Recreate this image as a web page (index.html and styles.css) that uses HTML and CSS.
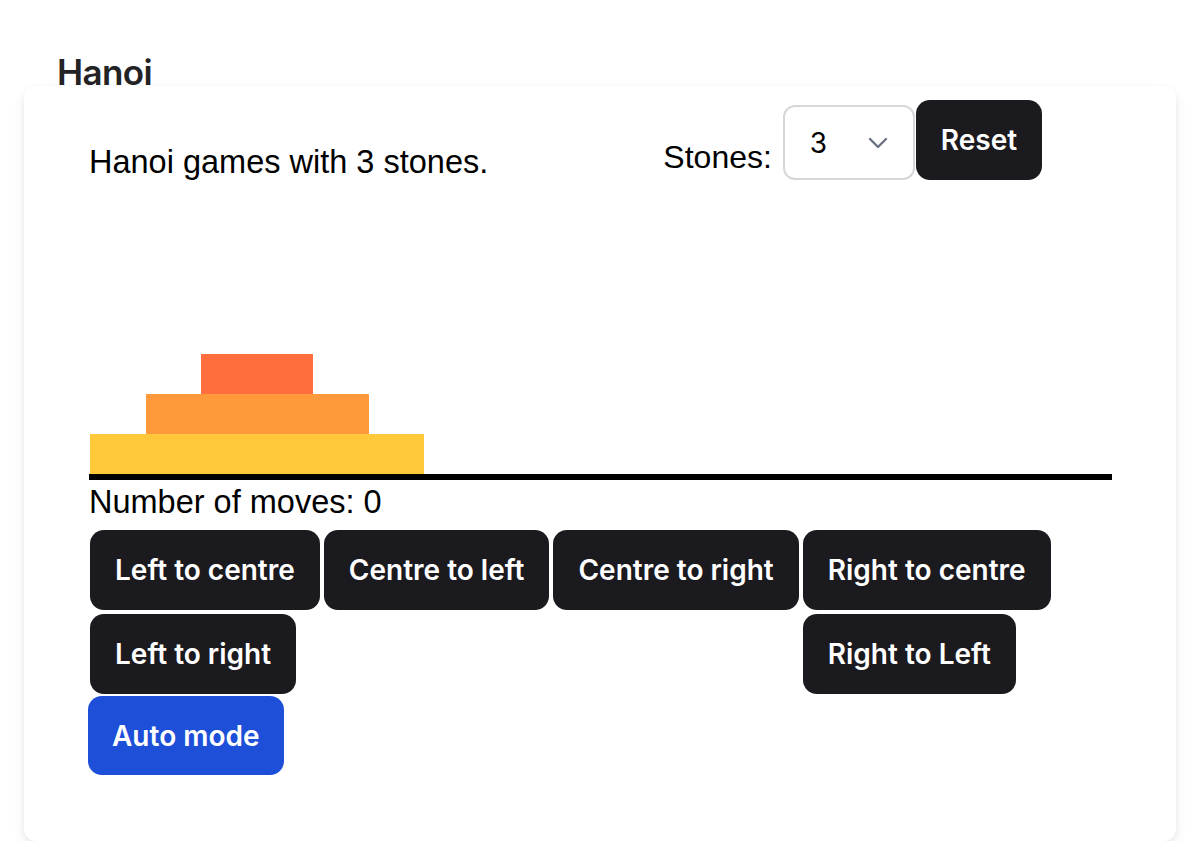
FILE: index.html
```html
<!DOCTYPE html>
<html lang="en">
<head>
<meta charset="utf-8">
<title>Hanoi</title>
<link rel="stylesheet" href="styles.css">
</head>
<body>
  <h1 class="title">Hanoi</h1>
  <main class="card">
    <header class="top">
      <p class="intro">Hanoi games with 3 stones.</p>
      <div class="controls">
        <span class="label">Stones:</span>
        <div class="select">
          <span class="select-value">3</span>
          <svg class="chevron" width="20" height="12" viewBox="0 0 20 12" aria-hidden="true">
            <path d="M2 2 L10 10 L18 2" fill="none" stroke="#6b7280" stroke-width="2.4" stroke-linecap="round" stroke-linejoin="round"/>
          </svg>
        </div>
        <button class="btn">Reset</button>
      </div>
    </header>

    <section class="board">
      <div class="peg">
        <div class="stone stone-3"></div>
        <div class="stone stone-2"></div>
        <div class="stone stone-1"></div>
      </div>
      <div class="peg"></div>
      <div class="peg"></div>
    </section>
    <div class="ground"></div>

    <p class="moves">Number of moves: 0</p>

    <div class="moves-grid">
      <button class="btn move">Left to centre</button>
      <button class="btn move">Centre to left</button>
      <button class="btn move">Centre to right</button>
      <button class="btn move">Right to centre</button>
      <button class="btn move">Left to right</button>
      <button class="btn move col4">Right to Left</button>
    </div>
    <button class="btn auto">Auto mode</button>
  </main>
</body>
</html>
```

FILE: styles.css
```css
* { box-sizing: border-box; }

html, body {
  margin: 0;
  background: #ffffff;
}

body {
  padding: 56px 20px 0 24px;
  font-family: "Liberation Sans", Arial, sans-serif;
  color: #000;
}

.title {
  margin: 0 0 -2px 33px;
  font-family: Inter, "Liberation Sans", sans-serif;
  font-weight: 600;
  font-size: 35px;
  line-height: 32px;
  letter-spacing: -0.6px;
  color: #232326;
}

.card {
  background: #fff;
  border-radius: 12px;
  box-shadow: 0 6px 14px rgba(0, 0, 0, 0.07), 0 1px 4px rgba(0, 0, 0, 0.05);
  padding: 14px 64px 66px 65px;
}

.top {
  display: grid;
  grid-template-columns: 1fr 1fr;
  align-items: end;
}

.intro {
  margin: 0 0 -6px 0;
  font-size: 32.5px;
  line-height: 48px;
}

.controls {
  justify-self: center;
  display: flex;
  align-items: flex-end;
  margin-right: 7px;
}

.label {
  font-size: 32px;
  line-height: 48px;
  margin-right: 11px;
  margin-bottom: -1px;
}

.select {
  width: 132px;
  height: 75px;
  border: 2px solid #d6d6db;
  border-radius: 12px;
  background: #fff;
  display: flex;
  align-items: center;
  padding-left: 25px;
  margin-right: 1px;
  font-family: Inter, "Liberation Sans", sans-serif;
  font-size: 28px;
}

.select-value {
  width: 58px;
}

.chevron {
  display: block;
  margin-top: 1px;
}

.btn {
  font-family: Inter, "Liberation Sans", sans-serif;
  font-weight: 600;
  font-size: 28px;
  line-height: 40px;
  color: #fff;
  background: #1b1a1f;
  border: none;
  border-radius: 14px;
  height: 80px;
  padding: 0 25px;
  cursor: pointer;
}

.board {
  display: grid;
  grid-template-columns: 1fr 1fr 1fr;
  height: 294px;
  align-items: end;
}

.peg {
  display: flex;
  flex-direction: column;
  align-items: center;
  padding-right: 5px;
}

.stone {
  height: 40px;
}

.stone-1 { width: 334px; background: #ffc83b; }
.stone-2 { width: 223px; background: #ff9a3c; }
.stone-3 { width: 112px; background: #ff6e3c; }

.ground {
  height: 6px;
  background: #000;
}

.moves {
  margin: 0 0 4px 0;
  font-size: 32.5px;
  line-height: 44px;
}

.moves-grid {
  display: grid;
  grid-template-columns: repeat(4, max-content);
  justify-items: start;
  margin-left: -1px;
}

.move {
  margin: 2px;
}

.col4 {
  grid-column: 4;
}

.auto {
  display: block;
  margin-left: -1px;
  padding: 0 24px;
  background: #1d4fd9;
  height: 79px;
}
```
